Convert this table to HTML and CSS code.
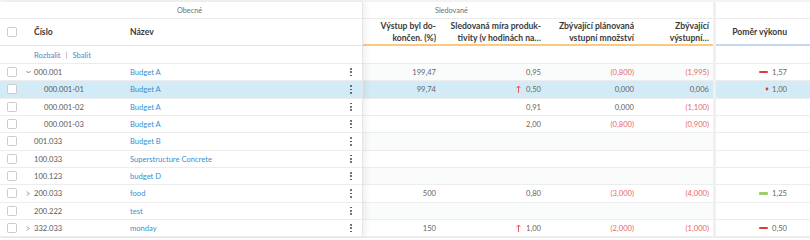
FILE: index.html
```html
<!DOCTYPE html>
<html lang="cs">
<head>
<meta charset="utf-8">
<link rel="stylesheet" href="styles.css">
</head>
<body>
<div class="grid">
  <div class="panel left">
    <div class="grp"><span class="grp-l">Obecné</span></div>
    <div class="hdr lrow">
      <div class="c-chk"><span class="chk"></span></div>
      <div class="c-num">Číslo</div>
      <div class="c-name">Název</div>
      <div class="c-menu"></div>
    </div>
    <div class="flt lrow">
      <div class="c-chk"></div>
      <div class="c-num"><span class="lnk">Rozbalit</span><span class="sep">|</span><span class="lnk">Sbalit</span></div>
    </div>
    <div class="row lrow">
      <div class="c-chk"><span class="chk"></span></div>
      <div class="c-num"><span class="tog"><svg width="5" height="4" viewBox="0 0 5 4"><path d="M0.5 1 L2.5 3 L4.5 1" fill="none" stroke="#666" stroke-width="0.8"/></svg></span>000.001</div>
      <div class="c-name lnk">Budget A</div>
      <div class="c-menu"><span class="kebab"><i></i><i></i><i></i></span></div>
    </div>
    <div class="row lrow sel">
      <div class="c-chk"><span class="chk"></span></div>
      <div class="c-num"><span class="tog"></span><span class="ind">000.001-01</span></div>
      <div class="c-name lnk">Budget A</div>
      <div class="c-menu"><span class="kebab"><i></i><i></i><i></i></span></div>
    </div>
    <div class="row lrow">
      <div class="c-chk"><span class="chk"></span></div>
      <div class="c-num"><span class="tog"></span><span class="ind">000.001-02</span></div>
      <div class="c-name lnk">Budget A</div>
      <div class="c-menu"><span class="kebab"><i></i><i></i><i></i></span></div>
    </div>
    <div class="row lrow">
      <div class="c-chk"><span class="chk"></span></div>
      <div class="c-num"><span class="tog"></span><span class="ind">000.001-03</span></div>
      <div class="c-name lnk">Budget A</div>
      <div class="c-menu"><span class="kebab"><i></i><i></i><i></i></span></div>
    </div>
    <div class="row lrow">
      <div class="c-chk"><span class="chk"></span></div>
      <div class="c-num"><span class="tog"></span>001.033</div>
      <div class="c-name lnk">Budget B</div>
      <div class="c-menu"><span class="kebab"><i></i><i></i><i></i></span></div>
    </div>
    <div class="row lrow">
      <div class="c-chk"><span class="chk"></span></div>
      <div class="c-num"><span class="tog"></span>100.033</div>
      <div class="c-name lnk">Superstructure Concrete</div>
      <div class="c-menu"><span class="kebab"><i></i><i></i><i></i></span></div>
    </div>
    <div class="row lrow">
      <div class="c-chk"><span class="chk"></span></div>
      <div class="c-num"><span class="tog"></span>100.123</div>
      <div class="c-name lnk">budget D</div>
      <div class="c-menu"><span class="kebab"><i></i><i></i><i></i></span></div>
    </div>
    <div class="row lrow">
      <div class="c-chk"><span class="chk"></span></div>
      <div class="c-num"><span class="tog"><svg width="4" height="5" viewBox="0 0 4 5"><path d="M1 0.5 L3 2.5 L1 4.5" fill="none" stroke="#666" stroke-width="0.8"/></svg></span>200.033</div>
      <div class="c-name lnk">food</div>
      <div class="c-menu"><span class="kebab"><i></i><i></i><i></i></span></div>
    </div>
    <div class="row lrow">
      <div class="c-chk"><span class="chk"></span></div>
      <div class="c-num"><span class="tog"></span>200.222</div>
      <div class="c-name lnk">test</div>
      <div class="c-menu"><span class="kebab"><i></i><i></i><i></i></span></div>
    </div>
    <div class="row lrow">
      <div class="c-chk"><span class="chk"></span></div>
      <div class="c-num"><span class="tog"><svg width="4" height="5" viewBox="0 0 4 5"><path d="M1 0.5 L3 2.5 L1 4.5" fill="none" stroke="#666" stroke-width="0.8"/></svg></span>332.033</div>
      <div class="c-name lnk">monday</div>
      <div class="c-menu"><span class="kebab"><i></i><i></i><i></i></span></div>
    </div>
  </div>

  <div class="panel mid">
    <div class="grp"><span class="grp-m">Sledované</span></div>
    <div class="hdr mrow">
      <div class="hc"><span>Výstup byl do-</span><span>končen. (%)</span></div>
      <div class="hc"><span>Sledovaná míra produk-</span><span>tivity (v hodinách na…</span></div>
      <div class="hc"><span>Zbývající plánovaná</span><span>vstupní množství</span></div>
      <div class="hc"><span>Zbývající</span><span>výstupní…</span></div>
    </div>
    <div class="flt mrow"></div>
    <div class="row mrow tint">
      <div class="n">199,47</div><div class="n">0,95</div><div class="n neg">(0,800)</div><div class="n neg">(1,995)</div>
    </div>
    <div class="row mrow sel">
      <div class="n">99,74</div><div class="n"><svg class="arr" width="5" height="8" viewBox="0 0 5 8"><path d="M2.5 8 V1 M0.4 3.2 L2.5 1 L4.6 3.2" fill="none" stroke="#e5484d" stroke-width="0.9"/></svg>0,50</div><div class="n">0,000</div><div class="n">0,006</div>
    </div>
    <div class="row mrow">
      <div class="n"></div><div class="n">0,91</div><div class="n">0,000</div><div class="n neg">(1,100)</div>
    </div>
    <div class="row mrow">
      <div class="n"></div><div class="n">2,00</div><div class="n neg">(0,800)</div><div class="n neg">(0,900)</div>
    </div>
    <div class="row mrow tint"></div>
    <div class="row mrow"></div>
    <div class="row mrow tint"></div>
    <div class="row mrow">
      <div class="n">500</div><div class="n">0,80</div><div class="n neg">(3,000)</div><div class="n neg">(4,000)</div>
    </div>
    <div class="row mrow tint"></div>
    <div class="row mrow">
      <div class="n">150</div><div class="n"><svg class="arr" width="5" height="8" viewBox="0 0 5 8"><path d="M2.5 8 V1 M0.4 3.2 L2.5 1 L4.6 3.2" fill="none" stroke="#e5484d" stroke-width="0.9"/></svg>1,00</div><div class="n neg">(2,000)</div><div class="n neg">(1,000)</div>
    </div>
  </div>

  <div class="panel right">
    <div class="grp"></div>
    <div class="hdr rrow"><div class="hc1">Poměr výkonu</div></div>
    <div class="flt rrow"></div>
    <div class="row rrow"><div class="n"><span class="bar red"></span>1,57</div></div>
    <div class="row rrow sel"><div class="n"><span class="dotw"><svg width="4" height="4" viewBox="0 0 4 4"><circle cx="2" cy="2" r="1.4" fill="#e53935"/></svg></span>1,00</div></div>
    <div class="row rrow"></div>
    <div class="row rrow"></div>
    <div class="row rrow"></div>
    <div class="row rrow"></div>
    <div class="row rrow"></div>
    <div class="row rrow"><div class="n"><span class="bar green"></span>1,25</div></div>
    <div class="row rrow"></div>
    <div class="row rrow"><div class="n"><span class="bar red"></span>0,50</div></div>
  </div>
</div>
</body>
</html>
```

FILE: styles.css
```css
* { box-sizing: border-box; }
html, body { margin: 0; padding: 0; background: #fff; }
body {
  font-family: Lato, "Liberation Sans", sans-serif;
  font-size: 7.6px;
  color: #5a5a5a;
  width: 810px;
  height: 240px;
  overflow: hidden;
}
.grid {
  display: flex;
  border-top: 2px solid #f3f3f3;
  border-bottom: 1px solid #ececec;
}
.panel { display: flex; flex-direction: column; }
.left {
  width: 363px;
  border-right: 1px solid #e6e6e6;
  box-shadow: 3px 0 5px rgba(0, 0, 0, 0.06);
  position: relative;
  z-index: 2;
}
.mid { width: 350px; }
.right { width: 97px; border-left: 3px solid #f0f0f0; }

.grp {
  height: 17px;
  border-bottom: 1px solid #ececec;
  display: flex;
  align-items: center;
  font-size: 7.3px;
  color: #6f6f6f;
}
.grp-l { padding-left: 177px; }
.grp-m { padding-left: 72px; }

.hdr {
  height: 27px;
  border-bottom: 1px solid #e4e4e4;
  font-weight: 700;
  font-size: 8.6px;
  color: #3a3a3a;
}
.mid .hdr { border-bottom: 2px solid #fbc97d; }
.right .hdr { border-bottom: 2px solid #c3d6f2; }

.flt { height: 18px; border-bottom: 1px solid #ececec; }
.row { height: 17.33px; border-bottom: 1px solid #ededed; }

.lrow { display: grid; grid-template-columns: 24px 106px 210px 22px; align-items: center; }
.mrow { display: grid; grid-template-columns: 77px 105px 93px 75px; align-items: center; }
.rrow { display: flex; align-items: center; justify-content: flex-end; padding-right: 23px; }

.c-chk { display: flex; padding-left: 7px; }
.chk {
  width: 10px; height: 10px;
  border: 1px solid #cbcbcb;
  border-radius: 1.5px;
  background: #fff;
}
.c-num { display: flex; align-items: center; white-space: nowrap; }
.hdr .c-num, .flt .c-num { padding-left: 10px; }
.tog { width: 10px; display: flex; align-items: center; padding-left: 2px; }
.ind { padding-left: 10px; }
.c-name { white-space: nowrap; }
.lnk { color: #3b8fd1; }
.sep { color: #999; padding: 0 5px; }
.c-menu { display: flex; justify-content: center; }
.kebab { display: flex; flex-direction: column; gap: 1.5px; }
.kebab i { width: 1.8px; height: 1.8px; border-radius: 50%; background: #4a4a4a; display: block; }

.sel { background: #d3ebf7; }
.tint { background: #fafbfb; }

.hc {
  display: flex;
  flex-direction: column;
  align-items: flex-end;
  padding-right: 4px;
  line-height: 12px;
  white-space: nowrap;
  overflow: hidden;
}
.hc1 { white-space: nowrap; }
.n {
  display: flex;
  justify-content: flex-end;
  align-items: center;
  padding-right: 4px;
  color: #666;
  white-space: nowrap;
}
.rrow .n { padding-right: 0; }
.neg { color: #e8686a; }
.arr { margin-right: 5px; }
.bar { width: 9px; height: 2.5px; margin-right: 4px; border-radius: 1px; }
.bar.red { background: #e53935; }
.bar.green { background: #9fce6a; }
.dotw { width: 9px; display: flex; justify-content: flex-end; margin-right: 3px; }
```
